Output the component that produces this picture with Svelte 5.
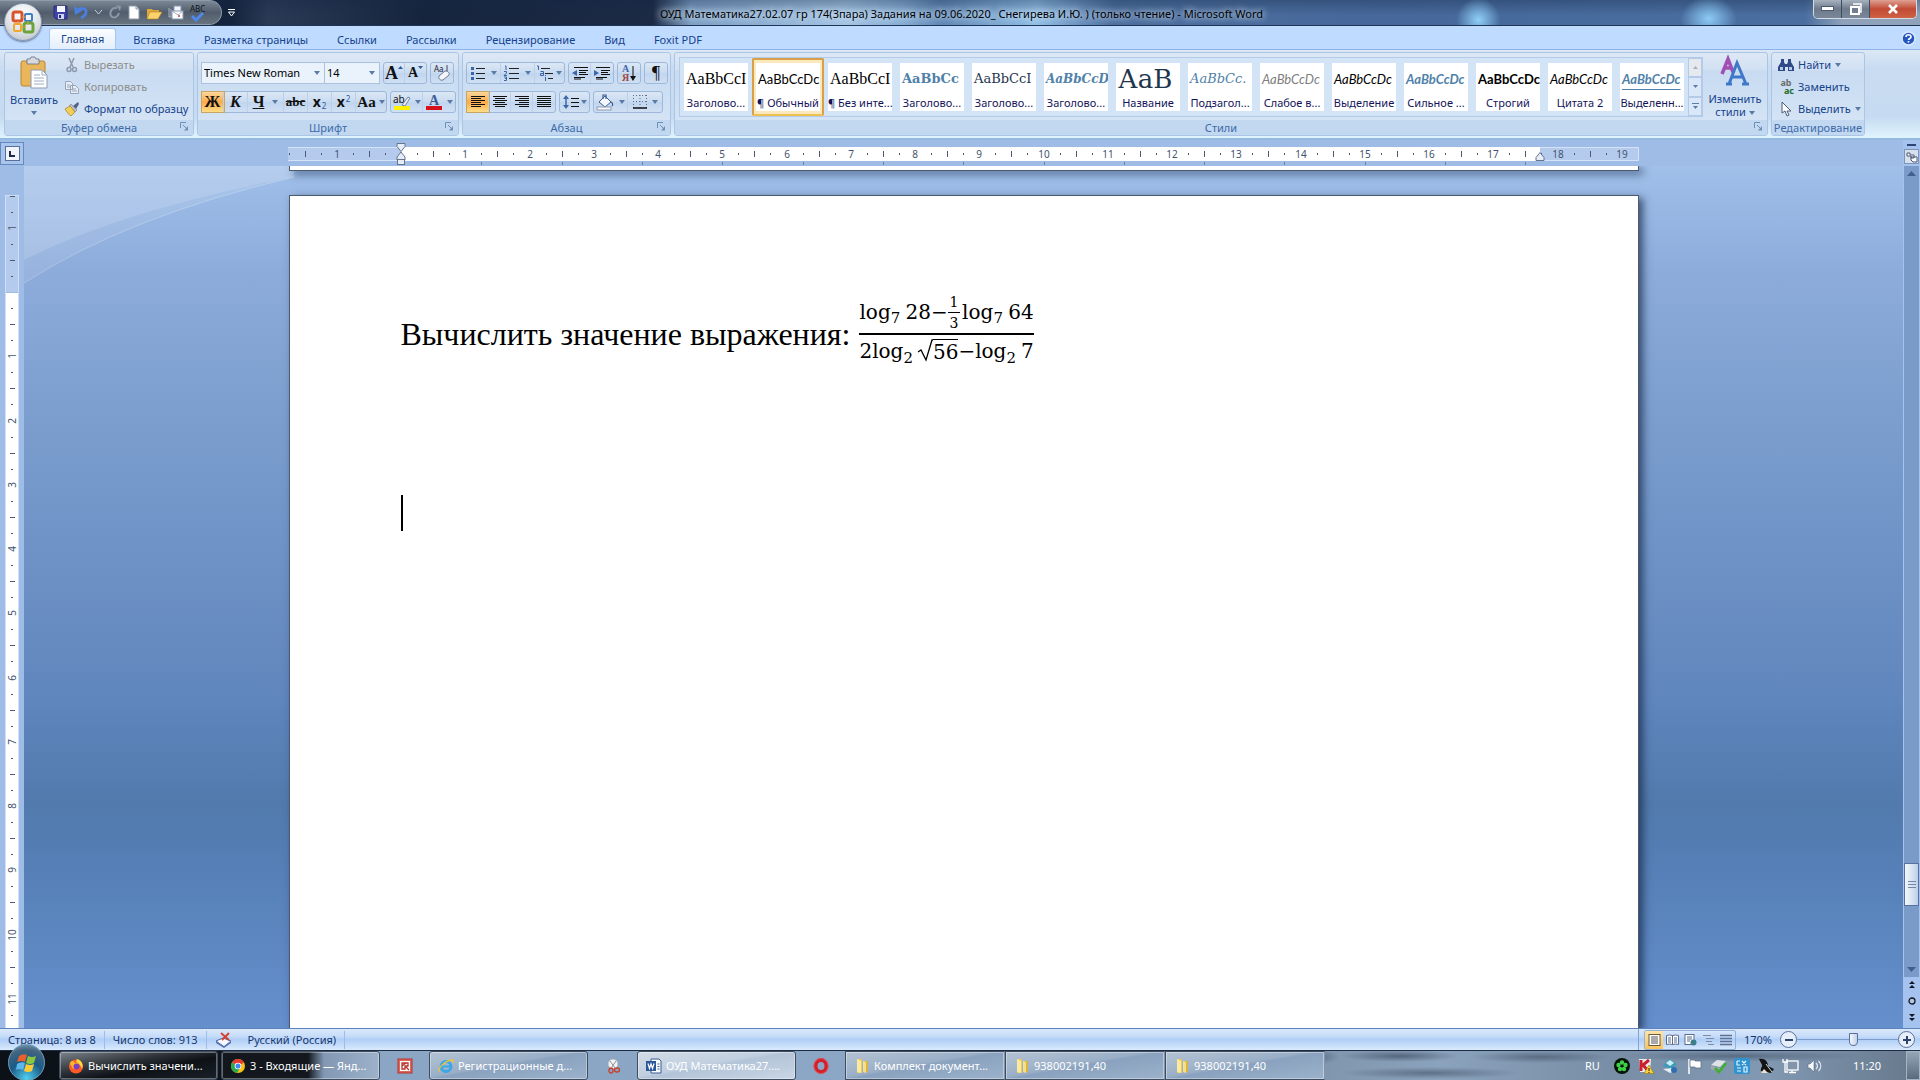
<script lang="ts">
  type Tab = { name: string; active?: boolean }
  type DocStyle = { sample: string; label: string; kind: string; selected?: boolean }
  type Task = { title: string; icon: string; look: string }

  const tabs: Tab[] = [
    { name: 'Главная', active: true },
    { name: 'Вставка' },
    { name: 'Разметка страницы' },
    { name: 'Ссылки' },
    { name: 'Рассылки' },
    { name: 'Рецензирование' },
    { name: 'Вид' },
    { name: 'Foxit PDF' },
  ]

  const docStyles: DocStyle[] = [
    { sample: 'AaBbCcI', label: 'Заголово...', kind: 'serif' },
    { sample: 'AaBbCcDc', label: '¶ Обычный', kind: 'sans', selected: true },
    { sample: 'AaBbCcI', label: '¶ Без инте...', kind: 'serif' },
    { sample: 'AaBbCc', label: 'Заголово...', kind: 'cambria bold blue' },
    { sample: 'AaBbCcI', label: 'Заголово...', kind: 'cambria navy' },
    { sample: 'AaBbCcD', label: 'Заголово...', kind: 'cambria bold italic blue little' },
    { sample: 'АаВ', label: 'Название', kind: 'cambria navy title' },
    { sample: 'AaBbCc.', label: 'Подзагол...', kind: 'cambria italic blue' },
    { sample: 'AaBbCcDc', label: 'Слабое в...', kind: 'sans italic grey' },
    { sample: 'AaBbCcDc', label: 'Выделение', kind: 'sans italic' },
    { sample: 'AaBbCcDc', label: 'Сильное ...', kind: 'sans bold italic blue' },
    { sample: 'AaBbCcDc', label: 'Строгий', kind: 'sans bold' },
    { sample: 'AaBbCcDc', label: 'Цитата 2', kind: 'sans italic' },
    { sample: 'AaBbCcDc', label: 'Выделенн...', kind: 'sans bold italic blue underlined' },
  ]

  const tasks: Task[] = [
    { title: 'Вычислить значени...', icon: 'firefox', look: 'dark' },
    { title: '3 - Входящие — Янд...', icon: 'chrome', look: 'half' },
    { title: '', icon: 'pdf', look: 'bare' },
    { title: 'Регистрационные д...', icon: 'ie', look: 'glass' },
    { title: '', icon: 'snip', look: 'bare' },
    { title: 'ОУД Математика27....', icon: 'word', look: 'current' },
    { title: '', icon: 'opera', look: 'bare' },
    { title: 'Комплект документ...', icon: 'folder', look: 'glass grouped' },
    { title: '938002191,40', icon: 'folder', look: 'glass grouped' },
    { title: '938002191,40', icon: 'folder', look: 'glass grouped' },
  ]

  const trayIcons = ['clover', 'kaspersky', 'dropbox', 'flag', 'check', 'input', 'pen', 'network', 'sound']

  const range = (n: number) => Array.from({ length: n }, (_, i) => i)

  // centimetres to screen pixels: 96 dpi at 170 %
  const cm = (n: number) => Math.round((n * 96 * 1.7) / 2.54)

  // quarter marks between the numbers: dot, dash, dot
  function marks(zero: number, end: number): { at: number; tall: boolean }[] {
    const out = []
    for (let q = -Math.floor(zero / 16); zero + cm(q / 4) < end - 2; q++) {
      if (q % 4 !== 0) out.push({ at: zero + cm(q / 4), tall: q % 2 === 0 })
    }
    return out
  }

  const hMarks = marks(113, 1351)
  const vMarks = marks(97, 833)

  let zoom = $state(57)
</script>

{#snippet caret()}
  <svg class="caret" viewBox="0 0 6 4" aria-hidden="true"><path d="M0 0h6L3 4z" fill="#5a7ba8" /></svg>
{/snippet}

{#snippet launcher()}
  <button class="launcher" aria-label="Параметры">
    <svg width="9" height="9" viewBox="0 0 9 9" fill="none" stroke="#6f8fb8">
      <path d="M.5 6V.5H6M3 3l4 4" /><path d="M8 4v4.500H4z" fill="#6f8fb8" stroke="none" />
    </svg>
  </button>
{/snippet}

{#snippet lines(kind: string)}
  <svg width="16" height="14" viewBox="0 0 16 14" stroke="#111" stroke-width="1" aria-hidden="true">
    {#each range(6) as i}
      {@const short = kind !== 'full' && i % 2 === 1}
      <path
        d="M{kind === 'right' && short ? 5 : kind === 'center' && short ? 3 : 1} {i * 2 + 1.5}H{kind === 'left' && short ? 11 : kind === 'center' && short ? 13 : 15}"
      />
    {/each}
  </svg>
{/snippet}

{#snippet appIcon(name: string)}
  <svg class="app-icon" viewBox="0 0 16 16" aria-hidden="true">
    {#if name === 'firefox'}
      <circle cx="8" cy="8.500" r="7" fill="#ff5a24" />
      <path d="M2 5c2-3 4-2 5 0 4-1 5 3 3 5-2 2-6 1-6-1 0-1-2-2-2-4z" fill="#ffb52b" />
      <circle cx="8.500" cy="8.500" r="3" fill="#7a3fc4" />
      <path d="M9 1c4 1 7 5 5 10-1-3-3-6-6-7z" fill="#ffd83c" />
    {:else if name === 'chrome'}
      <circle cx="8" cy="8" r="7" fill="#fbc116" />
      <path d="M8 8L2 4.500A7 7 0 0 1 14 4.500z" fill="#e33b2e" />
      <path d="M8 8L2 4.500A7 7 0 0 0 7 15l3-5z" fill="#2da94f" />
      <circle cx="8" cy="8" r="3.300" fill="#fff" /><circle cx="8" cy="8" r="2.500" fill="#4285f4" />
    {:else if name === 'pdf'}
      <rect x="1" y="1" width="14" height="14" fill="#d9695c" stroke="#b8322a" />
      <rect x="3" y="3" width="10" height="10" fill="#fff" />
      <path d="M5 5h6v3H8v3H5zM9 9l3 3M5 8l4-3" stroke="#b8322a" fill="none" stroke-width="1.300" />
    {:else if name === 'ie'}
      <circle cx="8" cy="8.500" r="5" fill="none" stroke="#39a7e8" stroke-width="2.800" />
      <path d="M4 8.500h9" stroke="#39a7e8" stroke-width="2" />
      <path d="M1 14c-1-4 5-11 13-12 2 0 1 2 1 3" fill="none" stroke="#e9c63c" stroke-width="1.300" />
    {:else if name === 'snip'}
      <circle cx="8" cy="6" r="5" fill="#f2f4f6" stroke="#a9afb7" />
      <path d="M5 3l5 7M11 3l-4 6" fill="none" stroke="#8a929d" />
      <ellipse cx="6" cy="12.500" rx="2" ry="2.500" fill="none" stroke="#c8402e" stroke-width="1.300" />
      <ellipse cx="12" cy="12" rx="2.500" ry="2" fill="none" stroke="#c8402e" stroke-width="1.300" />
    {:else if name === 'word'}
      <path d="M5 1h8l2 2v12H5z" fill="#f8fbff" stroke="#3a5a94" />
      <rect x="0" y="3" width="10" height="10" fill="#2b579a" />
      <path d="M2 5.500l1.500 5L5 6l1.500 4.500L8 5.500" fill="none" stroke="#fff" stroke-width="1.200" />
      <path d="M11.500 6h2M11.500 8.500h2M11.500 11h2" stroke="#3a5a94" />
    {:else if name === 'opera'}
      <ellipse cx="8" cy="8" rx="5.500" ry="6" fill="none" stroke="#d3202b" stroke-width="4" />
      <ellipse cx="8" cy="8" rx="7" ry="7.500" fill="none" stroke="#f0666a" stroke-width=".6" />
    {:else}
      <path d="M3 1h5v14H3z" fill="#e9c95c" />
      <path d="M3 1l4 2v12l-4-1z" fill="#fbeaa0" />
      <path d="M9 3h5v11H9z" fill="#d9b443" />
      <path d="M9 3l3 1v11l-3-1z" fill="#f6df86" />
    {/if}
  </svg>
{/snippet}

{#snippet trayIcon(name: string)}
  <svg class="app-icon" viewBox="0 0 16 16" aria-hidden="true">
    {#if name === 'clover'}
      <circle cx="8" cy="8" r="8" fill="#061306" />
      <g fill="#3fd04a">
        <circle cx="8" cy="4.500" r="2.200" /><circle cx="4.500" cy="7" r="2.200" /><circle cx="11.500" cy="7" r="2.200" />
        <circle cx="6" cy="11" r="2.200" /><circle cx="10" cy="11" r="2.200" />
      </g>
    {:else if name === 'kaspersky'}
      <path d="M1 1h12l-1 13H2z" fill="#e8eef0" /><path d="M3 2v11M11 2L5 7l6 7" stroke="#c9202c" stroke-width="3" fill="none" />
      <path d="M11 7l5 8.500H6z" fill="#f7cf3c" stroke="#9a7612" stroke-width=".6" /><path d="M11 10v3M11 14v1" stroke="#222" />
    {:else if name === 'dropbox'}
      <path d="M1 8l6-7 8 5-6 5z" fill="#3d9ab8" /><path d="M4 5l4-3 4 3-4 3z" fill="#c9f0f4" />
      <path d="M1 11l7 4 7-3-5-2z" fill="#e5eef2" /><circle cx="12" cy="12" r="3" fill="#2f6fb0" />
    {:else if name === 'flag'}
      <path d="M3 1v15" stroke="#fff" stroke-width="1.500" /><path d="M4 2h5v1h6v7H9V9H4z" fill="#fff" stroke="#56687e" stroke-width=".7" />
    {:else if name === 'check'}
      <path d="M1 7l6-5 9 1-6 6z" fill="#dfe2e4" /><path d="M1 8l9 2v4l-9-3z" fill="#a4a9ad" />
      <path d="M5 10l4 4 7-9" fill="none" stroke="#3fae35" stroke-width="2.800" />
    {:else if name === 'input'}
      <rect width="16" height="16" rx="2" fill="#2f93cf" /><path d="M3 3h3M3 3v4h3M8 3l4 4M12 3L8 7M3 10h4M3 13h4M10 9v5h3V9z" stroke="#e6f6ff" stroke-width="1.200" fill="none" />
    {:else if name === 'pen'}
      <path d="M1 1c6-1 9 3 9 7l6 3-3 4-10-2c-1-4 3-4 0-8z" fill="#141414" /><path d="M8 6l6 8" stroke="#d9d9d9" /><path d="M3 15l3-4 4 4z" fill="#e9e1d2" />
    {:else if name === 'network'}
      <rect x="5" y="3" width="11" height="9" fill="#8295ab" stroke="#fff" stroke-width="1.300" />
      <path d="M7 14.500h7M10 12v3M1 1v3h4V1M3 4v10h3" fill="none" stroke="#fff" stroke-width="1.300" />
    {:else}
      <path d="M2 6h2l4-4v12l-4-4H2z" fill="#f6f9fc" stroke="#5c6d80" stroke-width=".6" />
      <path d="M10 5c2 2 2 4 0 6M12.500 3c3 3 3 7 0 10" fill="none" stroke="#e6ecf2" stroke-width="1.200" />
    {/if}
  </svg>
{/snippet}

<div class="window">
  <header class="titlebar">
    <div class="quick">
      <button class="tool" aria-label="Сохранить">
        <svg width="15" height="15" viewBox="0 0 15 15"><path d="M1 1h13v13H3l-2-2z" fill="#3d43a8" stroke="#262a78" /><path d="M4 1h8v6H4z" fill="#f4f6ff" /><path d="M5 9h6v5H5z" fill="#cfd5ee" /><path d="M6 10h2v3H6z" fill="#262a78" /></svg>
      </button>
      <button class="tool" aria-label="Отменить">
        <svg width="15" height="15" viewBox="0 0 15 15"><path d="M3 6c4-4 10-3 9 2-1 3-3 4-5 5" fill="none" stroke="#4a7fe0" stroke-width="2.800" /><path d="M0 1l1 9 7-4z" fill="#4a7fe0" /></svg>
      </button>
      <svg width="7" height="5" viewBox="0 0 7 5"><path d="M0 0l3.500 4L7 0" fill="none" stroke="#c9d3e2" /></svg>
      <button class="tool" aria-label="Вернуть">
        <svg width="14" height="15" viewBox="0 0 14 15"><path d="M9 3c-5-1-8 4-6 8 3 3 7 1 8-3" fill="none" stroke="#8b98a8" stroke-width="2" /><path d="M8 0l5 1-1 5z" fill="#8b98a8" /></svg>
      </button>
      <button class="tool" aria-label="Создать">
        <svg width="12" height="15" viewBox="0 0 12 15"><path d="M1 1h7l3 3v10H1z" fill="#fff" stroke="#8e9bb0" /><path d="M8 1v3h3" fill="#cfdaea" stroke="#8e9bb0" /></svg>
      </button>
      <button class="tool" aria-label="Открыть">
        <svg width="16" height="14" viewBox="0 0 16 14"><path d="M1 3h5l1 1h6v3H5l-3 6H1z" fill="#dfa63a" /><path d="M4 6h12l-4 7H1z" fill="#fbd36b" stroke="#b98222" stroke-width=".6" /></svg>
      </button>
      <button class="tool" aria-label="Отправить">
        <svg width="16" height="15" viewBox="0 0 16 15"><rect x="6" y="1" width="7" height="7" fill="#f3f6fb" stroke="#8797b4" /><rect x="4" y="6" width="11" height="8" fill="#fff" stroke="#8797b4" /><path d="M4 6l6 4 5-4M3 4v8H1V3" fill="none" stroke="#a9b3c4" /><circle cx="11" cy="11" r="1" fill="#cc3b3b" /></svg>
      </button>
      <button class="tool spell" aria-label="Правописание">
        <span>ABC</span>
        <svg width="13" height="9" viewBox="0 0 13 9"><path d="M1 4l4 4 7-7" fill="none" stroke="#4c8af0" stroke-width="2.800" /></svg>
      </button>
    </div>
    <button class="customize" aria-label="Настройка панели">
      <svg width="7" height="8" viewBox="0 0 7 8"><path d="M0 .5h7" stroke="#fff" /><path d="M.5 3h6l-3 4z" fill="none" stroke="#fff" /></svg>
    </button>
    <h1>ОУД Математика27.02.07 гр 174(3пара) Задания на 09.06.2020_ Снегирева И.Ю. ) (только чтение) - Microsoft Word</h1>
    <div class="controls">
      <button aria-label="Свернуть"><svg width="13" height="6" viewBox="0 0 13 6"><rect x=".5" y=".5" width="12" height="4" fill="#fff" stroke="#4c5a70" /></svg></button>
      <button aria-label="Восстановить"><svg width="14" height="13" viewBox="0 0 14 13"><path d="M4 1h8v8h-2" fill="none" stroke="#fff" stroke-width="1.500" /><rect x="2" y="4" width="8" height="7" fill="none" stroke="#fff" stroke-width="2" /></svg></button>
      <button class="close" aria-label="Закрыть"><svg width="12" height="10" viewBox="0 0 12 10"><path d="M2 1l8 8M10 1L2 9" stroke="#fff" stroke-width="2.600" /></svg></button>
    </div>
    <button class="office" aria-label="Кнопка Office">
      <svg width="26" height="26" viewBox="0 0 26 26" fill="none" stroke-width="3">
        <rect x="3" y="3" width="9" height="9" rx="2" stroke="#d8552a" />
        <rect x="15" y="5" width="7" height="7" rx="1" stroke="#3f7fc4" stroke-width="2" />
        <rect x="4" y="15" width="7" height="7" rx="1" stroke="#f0a92c" stroke-width="2" />
        <rect x="14" y="14" width="9" height="9" rx="2" stroke="#6ba43a" />
        <path d="M12 8h4M8 12v4M18 12v4M12 18h4" stroke="#e59c4a" stroke-width="1" />
      </svg>
    </button>
  </header>

  <nav class="tabs">
    {#each tabs as tab}
      <button class:active={tab.active}>{tab.name}</button>
    {/each}
    <button class="help" aria-label="Справка">
      <svg width="15" height="15" viewBox="0 0 15 15"><circle cx="7.500" cy="7.500" r="6.500" fill="#2456c0" stroke="#dbe8fb" stroke-width="1.500" /><path d="M5 6c0-3 5-3 5 0 0 1.500-2.500 1.500-2.500 3" fill="none" stroke="#fff" stroke-width="1.600" /><rect x="6.700" y="10" width="1.600" height="1.600" fill="#fff" /></svg>
    </button>
  </nav>

  <section class="ribbon">
    <div class="group clipboard">
      <div class="content">
        <button class="big">
          <svg width="28" height="32" viewBox="0 0 28 32">
            <rect x="1" y="4" width="24" height="25" rx="2" fill="#e9b75a" stroke="#b98532" />
            <path d="M7 2h3l1-2h4l1 2h3v5H7z" fill="#d6d9df" stroke="#666e7c" stroke-width=".8" />
            <path d="M11 13h11l5 5v13H11z" fill="#fff" stroke="#8d9bb5" />
            <path d="M22 13v5h5M14 18h6M14 21h10M14 24h10M14 27h10" fill="none" stroke="#9dacc6" />
          </svg>
          <span>Вставить</span>
          {@render caret()}
        </button>
        <div class="stack">
          <button class="small" disabled>
            <svg width="16" height="16" viewBox="0 0 16 16" fill="none" stroke="#8d99ac" stroke-width="1.500"><path d="M5 1l4 9M10 1L6 10" /><circle cx="5" cy="12.500" r="2" /><circle cx="10.500" cy="12.500" r="2" /></svg>
            Вырезать
          </button>
          <button class="small" disabled>
            <svg width="16" height="16" viewBox="0 0 16 16" fill="#e9eef6" stroke="#98a5b9"><path d="M1.500 2.500h5l2 2v6h-7zM6.500 6.500h5l3 3v5h-8z" /><path d="M3 6h3M3 8h3M8 10h4M8 12h5" /></svg>
            Копировать
          </button>
          <button class="small">
            <svg width="16" height="16" viewBox="0 0 16 16"><path d="M9 5l5-4 1 2-3 5z" fill="#56618a" /><path d="M7 3l6 6-2 2-6-6z" fill="#b9c0cc" stroke="#777" stroke-width=".6" /><path d="M1 8l5-3 5 6-4 4c-2-1-4-4-6-7z" fill="#f3cf58" stroke="#a17d21" stroke-width=".7" /></svg>
            Формат по образцу
          </button>
        </div>
      </div>
      <footer>Буфер обмена{@render launcher()}</footer>
    </div>

    <div class="group font">
      <div class="content rows">
        <div class="row">
          <div class="combos">
            <label class="combo family"><select aria-label="Шрифт"><option>Times New Roman</option></select>{@render caret()}</label>
            <label class="combo size"><select aria-label="Размер шрифта"><option>14</option></select>{@render caret()}</label>
          </div>
          <div class="cluster">
            <button class="glyph serif-a">A<svg width="5" height="3" viewBox="0 0 5 3"><path d="M0 3h5L2.500 0z" fill="#2f5a9c" /></svg></button>
            <button class="glyph serif-a less">A<svg width="5" height="3" viewBox="0 0 5 3"><path d="M0 0h5L2.500 3z" fill="#2f5a9c" /></svg></button>
          </div>
          <div class="cluster">
            <button class="glyph" aria-label="Очистить формат"><svg width="18" height="18" viewBox="0 0 18 18"><text x="1" y="8" font-size="8" fill="#223">Aa</text><path d="M6 12l6-5c3 0 5 2 4 4l-6 5c-3 1-5-2-4-4z" fill="#f4f6fa" stroke="#6b7690" /><path d="M14 1v6" stroke="#445" /></svg></button>
          </div>
        </div>
        <div class="row">
          <div class="cluster">
            <button class="glyph on"><b>Ж</b></button>
            <button class="glyph"><b><i>К</i></b></button>
            <button class="glyph wide"><b><u>Ч</u></b>{@render caret()}</button>
            <button class="glyph strike"><s>abc</s></button>
            <button class="glyph script"><b>x</b><sub>2</sub></button>
            <button class="glyph script"><b>x</b><sup>2</sup></button>
            <button class="glyph case">Aa{@render caret()}</button>
          </div>
          <div class="cluster">
            <button class="glyph pair" aria-label="Цвет выделения">
              <svg width="18" height="18" viewBox="0 0 18 18"><text x="0" y="10" font-size="10" fill="#111">ab</text><path d="M9 12l6-8 2 1-5 8z" fill="#e8eef6" stroke="#5b6b88" stroke-width=".8" /><rect x="1" y="13" width="16" height="4" fill="#fff200" /></svg>
              {@render caret()}
            </button>
            <button class="glyph pair font-color" aria-label="Цвет текста">
              <svg width="18" height="18" viewBox="0 0 18 18"><text x="4" y="12" font-size="14" font-weight="bold" fill="#3c5a96">A</text><rect x="1" y="13" width="16" height="4" fill="#d5101a" /></svg>
              {@render caret()}
            </button>
          </div>
        </div>
      </div>
      <footer>Шрифт{@render launcher()}</footer>
    </div>

    <div class="group paragraph">
      <div class="content rows">
        <div class="row">
          <div class="cluster">
            <button class="glyph pair" aria-label="Маркеры">
              <svg width="15" height="14" viewBox="0 0 15 14"><g fill="#3d66a8"><rect x="0" y="1" width="3" height="3" /><rect x="0" y="6" width="3" height="3" /><rect x="0" y="11" width="3" height="3" /></g><path d="M5 2.500h9M5 7.500h9M5 12.500h9" stroke="#222" /></svg>
              {@render caret()}
            </button>
            <button class="glyph pair" aria-label="Нумерация">
              <svg width="16" height="16" viewBox="0 0 16 16"><path d="M1 1h1v4M0 6.500h2.500v1.500L0 10.500h3M0 12h2.500v3.500H0M1 13.500h1" fill="none" stroke="#3d66a8" /><path d="M5 3.500h10M5 8.500h10M5 13.500h10" stroke="#222" /></svg>
              {@render caret()}
            </button>
            <button class="glyph multi" aria-label="Многоуровневый список">
              <svg width="17" height="16" viewBox="0 0 17 16"><path d="M0 1h1.500v4M3.500 6.500h3v4h-3v-2h3M8.500 12v4M8.500 10v1" fill="none" stroke="#3d66a8" /><path d="M4 3.500h9M8 8.500h8M11 13.500h5" stroke="#222" /></svg>
              {@render caret()}
            </button>
          </div>
          <div class="cluster">
            <button class="glyph" aria-label="Уменьшить отступ"><svg width="16" height="14" viewBox="0 0 16 14"><path d="M2 1.500h14M7 4.500h9M7 6.500h7M7 8.500h9M2 11.500h11M2 13h7" stroke="#111" /><path d="M5 4v6L0 7z" fill="#3d66a8" /></svg></button>
            <button class="glyph" aria-label="Увеличить отступ"><svg width="16" height="14" viewBox="0 0 16 14"><path d="M2 1.500h14M7 4.500h9M7 6.500h7M7 8.500h9M2 11.500h11M2 13h7" stroke="#111" /><path d="M0 4v6l5-3z" fill="#3d66a8" /></svg></button>
          </div>
          <div class="cluster">
            <button class="glyph sort" aria-label="Сортировка">
              <span class="letters"><span>А</span><span>Я</span></span>
              <svg width="6" height="15" viewBox="0 0 6 15"><path d="M3 0v11" stroke="#111" /><path d="M0 10h6l-3 5z" fill="#111" /></svg>
            </button>
          </div>
          <div class="cluster">
            <button class="glyph pilcrow">¶</button>
          </div>
        </div>
        <div class="row">
          <div class="cluster">
            <button class="glyph on" aria-label="По левому краю">{@render lines('left')}</button>
            <button class="glyph" aria-label="По центру">{@render lines('center')}</button>
            <button class="glyph" aria-label="По правому краю">{@render lines('right')}</button>
            <button class="glyph" aria-label="По ширине">{@render lines('full')}</button>
          </div>
          <div class="cluster">
            <button class="glyph multi" aria-label="Интервал">
              <svg width="16" height="16" viewBox="0 0 16 16"><path d="M3 3v10" stroke="#3d66a8" stroke-width="1.500" /><path d="M0 5l3-4 3 4zM0 11l3 4 3-4z" fill="#3d66a8" /><path d="M8 4.500h8M8 8.500h8M8 12.500h8" stroke="#111" /></svg>
              {@render caret()}
            </button>
          </div>
          <div class="cluster">
            <button class="glyph pair" aria-label="Заливка">
              <svg width="18" height="17" viewBox="0 0 18 17"><path d="M3 8l6-6 6 6-6 5z" fill="#f4f8fd" stroke="#3b5c93" /><path d="M7 5V1h3v4M15 8c2 1 2 3 1 4" fill="none" stroke="#3b5c93" stroke-width="1.200" /><rect x="1" y="13" width="14" height="3" fill="#f8f8f8" stroke="#8b9bb5" /></svg>
              {@render caret()}
            </button>
            <button class="glyph pair" aria-label="Границы">
              <svg width="14" height="14" viewBox="0 0 14 14"><path d="M.5 0v13M7 0v13M13.500 0v13M0 .5h14M0 6.500h14" stroke="#5d6f8d" stroke-dasharray="1 2" /><path d="M0 13h14" stroke="#111" stroke-width="1.500" /></svg>
              {@render caret()}
            </button>
          </div>
        </div>
      </div>
      <footer>Абзац{@render launcher()}</footer>
    </div>

    <div class="group styles">
      <div class="content">
        <div class="gallery">
          {#each docStyles as s}
            <button class="style" class:selected={s.selected}>
              <span class="sample {s.kind}">{s.sample}</span>
              <span class="label">{s.label}</span>
            </button>
          {/each}
          <div class="gallery-scroll">
            <button disabled aria-label="Вверх"><svg width="5" height="3" viewBox="0 0 5 3"><path d="M0 3h5L2.500 0z" fill="#a5b0c0" /></svg></button>
            <button aria-label="Вниз"><svg width="5" height="3" viewBox="0 0 5 3"><path d="M0 0h5L2.500 3z" fill="#5a7ba8" /></svg></button>
            <button aria-label="Все стили"><svg width="7" height="7" viewBox="0 0 7 7"><path d="M0 .5h7" stroke="#5a7ba8" /><path d="M1 3h5L3.500 6z" fill="#5a7ba8" /></svg></button>
          </div>
        </div>
        <button class="big change">
          <svg width="30" height="30" viewBox="0 0 30 30" fill="none">
            <path d="M2 17L8 2l5 13M4 11h7" stroke="#a24fb4" stroke-width="3.500" />
            <path d="M9 27L17 6l9 21M12 20h11M6 27h6M22 27h7" stroke="#3f78c8" stroke-width="3" />
          </svg>
          <span>Изменить</span>
          <span>стили {@render caret()}</span>
        </button>
      </div>
      <footer>Стили{@render launcher()}</footer>
    </div>

    <div class="group editing">
      <div class="content">
        <div class="stack">
          <button class="small">
            <svg width="16" height="14" viewBox="0 0 16 14"><path d="M3 1h3v3l1 2h2l1-2V1h3v3l3 5v4h-6V9H7v4H0V9l3-5z" fill="#2f4a86" /><path d="M2 9h3v3H2zM11 9h3v3h-3z" fill="#b5c8e8" /></svg>
            Найти {@render caret()}
          </button>
          <button class="small">
            <span class="replace"><b>ab</b><b>ac</b></span>
            Заменить
          </button>
          <button class="small">
            <svg width="16" height="16" viewBox="0 0 16 16"><path d="M4 1v11l3-2 2 5 2-1-2-4h4z" fill="#fff" stroke="#4b5b78" /></svg>
            Выделить {@render caret()}
          </button>
        </div>
      </div>
      <footer>Редактирование</footer>
    </div>
  </section>

  <main>
    <aside class="left-rail">
      <button class="tab-stop" aria-label="Табуляция"><span><svg width="6" height="6" viewBox="0 0 6 6"><path d="M1 0v5h5" fill="none" stroke="#1c2b4d" stroke-width="2" /></svg></span></button>
      <svg class="v-ruler" width="14" height="833" viewBox="0 0 14 833">
        <rect width="14" height="97" fill="#b4cbee" />
        <rect y="98" width="14" height="735" fill="#fff" />
        <path d="M.5 0v833M13.500 0v833M0 .5h14" stroke="#cfdff7" />
        {#each vMarks as m}
          <path d={m.tall ? `M5 ${m.at}.5h5` : `M6 ${m.at}.5h2`} stroke="#4d5a70" />
        {/each}
        <text transform="translate(11 33) rotate(-90)">1</text>
        {#each range(11) as i}
          <text transform="translate(11 {97 + cm(i + 1)}) rotate(-90)">{i + 1}</text>
        {/each}
      </svg>
    </aside>

    <div class="work">
      <div class="ruler-row">
        <svg width="1351" height="24" viewBox="0 0 1351 24">
          <rect y="4" width="1350" height="14" fill="#b4cbee" />
          <path d="M0 4.500h1350.500v13H0" fill="none" stroke="#d5e3f8" />
          <rect x="113" y="4" width="1139" height="14" fill="#fff" />
          {#each hMarks as m}
            <path d={m.tall ? `M${m.at}.5 8v6` : `M${m.at}.5 10v2`} stroke="#4d5a70" />
          {/each}
          {#each range(14) as i}
            <path d="M{113 + cm((i + 1) * 1.25)}.5 19v3" stroke="#6b7f9e" />
          {/each}
          <text x="49" y="15">1</text>
          {#each range(19) as i}
            <text x={113 + cm(i + 1)} y="15">{i + 1}</text>
          {/each}
          <g fill="#e6edf8" stroke="#66758e">
            <path d="M109 .5h8v3l-4 5-4-5z" /><path d="M113 9l4 5v3h-8v-3z" /><rect x="109.500" y="16.500" width="7" height="5" />
            <path d="M1252 9.500l4 5v3h-8v-3z" />
          </g>
        </svg>
      </div>
      <div class="canvas">
        <svg class="swoosh" width="270" height="120" viewBox="0 0 270 120" aria-hidden="true">
          <path d="M0 0h270v11Q98 44 0 94z" fill="#fff" opacity=".22" />
          <path d="M0 94Q98 44 270 11Q104 50 0 117z" fill="#fff" opacity=".1" />
          <path d="M0 117Q104 50 270 11" fill="none" stroke="#fff" opacity=".25" />
        </svg>
        <div class="page previous"></div>
        <article class="page">
          <p class="task">
            <span>Вычислить значение выражения:</span>
            <span class="frac">
              <span class="line num">log<sub>7</sub><span class="arg">28−</span><span class="third"><span>1</span><span>3</span></span>log<sub>7</sub><span class="arg">64</span></span>
              <span class="line den">2log<sub>2</sub><span class="root"><svg width="16" height="22" viewBox="0 0 16 22"><path d="M1 13l3-2 5 10L15 1h1" fill="none" stroke="#000" stroke-width="1.300" /></svg><span>56</span></span>−log<sub>2</sub><span class="arg">7</span></span>
            </span>
          </p>
          <div class="cursor"></div>
        </article>
      </div>
    </div>

    <aside class="scroll">
      <div class="split"></div>
      <button class="ruler-toggle" aria-label="Линейка"><svg width="12" height="12" viewBox="0 0 12 12" fill="#fff" stroke="#4a5874"><path d="M1 2h3v2h4v3H5V5H1zM5 6h6v5H7L5 9z" /></svg></button>
      <div class="track">
        <button aria-label="Вверх"><svg width="9" height="5" viewBox="0 0 9 5"><path d="M0 5h9L4.500 0z" fill="#425f92" /></svg></button>
        <div class="thumb"><svg width="8" height="7" viewBox="0 0 8 7"><path d="M0 .5h8M0 3.500h8M0 6.500h8" stroke="#7587a5" /></svg></div>
        <button aria-label="Вниз"><svg width="9" height="5" viewBox="0 0 9 5"><path d="M0 0h9L4.500 5z" fill="#425f92" /></svg></button>
      </div>
      <div class="jump">
        <button aria-label="Предыдущая страница"><svg width="6" height="7" viewBox="0 0 6 7"><path d="M0 3h6L3 0zM0 7h6L3 4z" fill="#0d1524" /></svg></button>
        <button aria-label="Объект перехода"><svg width="8" height="8" viewBox="0 0 8 8"><circle cx="4" cy="4" r="3" fill="#b7c6de" stroke="#0d1524" stroke-width="1.300" /></svg></button>
        <button aria-label="Следующая страница"><svg width="6" height="7" viewBox="0 0 6 7"><path d="M0 0h6L3 3zM0 4h6L3 7z" fill="#0d1524" /></svg></button>
      </div>
    </aside>
  </main>

  <section class="status">
    <button>Страница: 8 из 8</button>
    <button>Число слов: 913</button>
    <button class="lang">
      <svg width="18" height="16" viewBox="0 0 18 16"><path d="M1 9l7-3 8 3-7 6z" fill="#f5f8ff" stroke="#4c64a0" /><path d="M1 9v2l8 5v-2zM9 14l7-5v2l-7 5z" fill="#5874b8" /><path d="M6 1l8 7M14 1L7 8" stroke="#d5402c" stroke-width="1.800" /></svg>
      Русский (Россия)
    </button>
    <div class="right">
      <div class="views">
        <button class="on" aria-label="Разметка"><svg width="13" height="12" viewBox="0 0 13 12"><rect x="1" y=".5" width="11" height="11" fill="#fff" stroke="#6b5a3a" /><path d="M3 3h7M3 5h7M3 7h7M3 9h7" stroke="#555" /></svg></button>
        <button aria-label="Чтение"><svg width="13" height="12" viewBox="0 0 13 12"><path d="M.5 1.500q3-1 6 0 3-1 6 0v9q-3-1-6 0-3-1-6 0zM6.500 1v10" fill="#fff" stroke="#5b6d8d" /><path d="M2 4h3M2 6h3M8 4h3M8 6h3M2 8h3M8 8h3" stroke="#5b6d8d" /></svg></button>
        <button aria-label="Веб-документ"><svg width="13" height="12" viewBox="0 0 13 12"><rect x="1" y=".5" width="9" height="10" fill="#fff" stroke="#5b6d8d" /><path d="M3 3h5M3 5h5M3 7h3" stroke="#5b6d8d" /><circle cx="9.500" cy="8.500" r="3" fill="#3b7f8c" /></svg></button>
        <button aria-label="Структура"><svg width="13" height="12" viewBox="0 0 13 12"><path d="M1 1.500h8M4 4.500h8M4 7.500h6M6 10.500h6" stroke="#7d8ca5" /></svg></button>
        <button aria-label="Черновик"><svg width="13" height="12" viewBox="0 0 13 12"><path d="M0 1.500h12M0 4.500h12M0 7.500h12M0 10.500h12" stroke="#5f7190" stroke-width="1.300" /></svg></button>
      </div>
      <button class="percent">170%</button>
      <button class="round" aria-label="Уменьшить"><svg width="8" height="8" viewBox="0 0 8 8"><path d="M0 4h8" stroke="#2d4370" stroke-width="2" /></svg></button>
      <input type="range" min="0" max="100" bind:value={zoom} aria-label="Масштаб" />
      <button class="round" aria-label="Увеличить"><svg width="8" height="8" viewBox="0 0 8 8"><path d="M0 4h8M4 0v8" stroke="#2d4370" stroke-width="2" /></svg></button>
    </div>
  </section>

  <footer class="taskbar">
    <button class="start" aria-label="Пуск">
      <svg width="22" height="20" viewBox="0 0 22 20"><path d="M3 3q4-3 8-1l-2 7q-4-2-8 0z" fill="#e8602c" /><path d="M12 3q4 2 8 0l-2 7q-4 2-8 0z" fill="#8cc63e" /><path d="M1 11q4-3 8-1l-2 7q-4-2-7 0z" fill="#5cb8ec" /><path d="M10 11q4 2 8 0l-2 7q-4 2-8 0z" fill="#fccb36" /></svg>
    </button>
    <div class="tasks">
      {#each tasks as task}
        <button class="task-button {task.look}" aria-label={task.title || task.icon}>
          {@render appIcon(task.icon)}
          {#if task.title}<span>{task.title}</span>{/if}
        </button>
      {/each}
    </div>
    <div class="tray">
      <span class="locale">RU</span>
      {#each trayIcons as name}
        {@render trayIcon(name)}
      {/each}
      <time>11:20</time>
      <button class="desktop" aria-label="Показать рабочий стол"></button>
    </div>
  </footer>
</div>

<style>
  :global(body) {
    margin: 0;
    background: #9fbde6;
  }

  .window {
    display: flex;
    flex-direction: column;
    height: 100vh;
    overflow: hidden;
    font: 11px/16px 'Noto Sans', 'Open Sans', sans-serif;
    color: #15428b;
  }

  button {
    border: 0;
    padding: 0;
    background: none;
    font: inherit;
    color: inherit;
    display: flex;
    align-items: center;
    justify-content: center;
    box-sizing: border-box;
    white-space: nowrap;
  }

  svg {
    flex: none;
    overflow: visible;
  }

  .caret {
    width: 6px;
    height: 4px;
  }

  /* title bar */
  .titlebar {
    position: relative;
    display: flex;
    align-items: flex-start;
    height: 26px;
    box-sizing: border-box;
    border-bottom: 1px solid #1f3554;
    background:
      radial-gradient(ellipse 22px 22px at 77% 80%, #8fd0f8, transparent),
      radial-gradient(ellipse 28px 22px at 89% 75%, #8ccbf5, transparent),
      linear-gradient(180deg, rgba(20, 40, 70, 0.35), transparent 60%),
      linear-gradient(90deg, #1e2f48 0, #14233c 12%, #2a3a55 14%, #16243d 22%, #1c2a45 34%, #7d9fc4 36%, #a3c4e4 44%, #86add3 47%, #5f87b4 49%, #91bfe6 54%, #4c6e9e 58%, #46689a 72%, #4a6ea0 94%, #8fa2ba 96%);
  }

  .quick {
    display: flex;
    align-items: center;
    gap: 6px;
    height: 25px;
    width: 222px;
    padding-left: 53px;
    box-sizing: border-box;
    border: 1px solid #8d9bab;
    border-left: 0;
    border-radius: 0 14px 14px 0;
    background: linear-gradient(#7b8794, #515d6c 50%, #68747f);
  }

  .spell {
    flex-direction: column;
  }

  .spell span {
    font-size: 8px;
    line-height: 7px;
    color: #10131c;
  }

  .customize {
    width: 18px;
    height: 25px;
  }

  h1 {
    flex: 1;
    margin: 0;
    padding-right: 130px;
    font-size: 11px;
    font-weight: normal;
    line-height: 27px;
    text-align: center;
    color: #000;
    white-space: nowrap;
    text-shadow: 0 0 6px #dcecfb, 0 0 8px rgba(220, 236, 251, 0.7);
  }

  .controls {
    display: flex;
    height: 18px;
    margin-right: 3px;
    border: 1px solid #d2dbe6;
    border-top: 0;
    border-radius: 0 0 5px 5px;
    overflow: hidden;
  }

  .controls button {
    width: 28px;
    border-right: 1px solid #3c4c63;
    background: linear-gradient(#a8b2bf, #6d7a8c 50%, #7b8899);
  }

  .controls .close {
    width: 46px;
    border: 0;
    background: linear-gradient(#dfa193, #c24a34 50%, #ce6243);
  }

  .office {
    position: absolute;
    left: 4px;
    top: 3px;
    z-index: 2;
    width: 38px;
    height: 38px;
    border-radius: 50%;
    border: 1px solid #8796ac;
    background: radial-gradient(circle at 50% 30%, #fff, #dfe3e8 55%, #b1b8c1);
    box-shadow: 0 1px 2px rgba(30, 50, 90, 0.6);
  }

  /* tabs */
  .tabs {
    display: flex;
    align-items: flex-end;
    height: 23px;
    padding-left: 48px;
    background: #bfdbff;
  }

  .tabs button {
    height: 21px;
    padding: 2px 15px 0 14px;
  }

  .tabs .active {
    padding: 0 11px;
    margin: 0 3px 0 1px;
    border: 1px solid #a7c6ee;
    border-bottom: 0;
    border-radius: 3px 3px 0 0;
    background: linear-gradient(#fbfdff, #e3eefb);
  }

  .tabs .help {
    margin-left: auto;
    padding: 0 4px;
  }

  /* ribbon */
  .ribbon {
    display: flex;
    gap: 3px;
    height: 91px;
    box-sizing: border-box;
    padding: 2px 4px;
    border-top: 1px solid #8db2e3;
    border-bottom: 2px solid #92bbdf;
    background: linear-gradient(#dce8f6, #c9dcf1 20%, #c6daf1 75%, #dff4fd);
  }

  .group {
    display: flex;
    flex-direction: column;
    flex: none;
    border: 1px solid #abc6e5;
    border-radius: 3px;
    box-sizing: border-box;
    background: linear-gradient(#dde8f5, #d2e1f3 20%, #c8dbf1 22%, #d7e6f6);
  }

  .group .content {
    display: flex;
    flex: 1;
    padding: 0 4px;
  }

  .group footer {
    position: relative;
    height: 15px;
    line-height: 15px;
    text-align: center;
    background: #c1d8f0;
    color: #3e6aaa;
  }

  .launcher {
    position: absolute;
    right: 4px;
    top: 2px;
  }

  .clipboard {
    width: 190px;
  }

  .font {
    width: 262px;
  }

  .paragraph {
    width: 209px;
  }

  .styles {
    width: 1094px;
  }

  .editing {
    width: 94px;
  }

  .big {
    flex-direction: column;
    justify-content: flex-start;
    gap: 3px;
    width: 50px;
    padding-top: 4px;
  }

  .stack {
    display: flex;
    flex-direction: column;
    gap: 6px;
    padding: 4px 0 0 5px;
  }

  .small {
    justify-content: flex-start;
    gap: 4px;
    height: 16px;
  }

  .small:disabled {
    color: #8d8d8d;
  }

  .editing .stack {
    padding-left: 2px;
  }

  .replace {
    position: relative;
    display: flex;
    flex-direction: column;
    width: 16px;
    font-size: 9px;
    line-height: 8px;
    color: #6b6b6b;
  }

  .replace b:last-child {
    align-self: flex-end;
    color: #1d6b2a;
  }

  .rows {
    flex-direction: column;
    gap: 7px;
  }

  .group .rows {
    padding: 9px 0 0 3px;
  }

  .row {
    display: flex;
    gap: 3px;
    height: 22px;
  }

  .combos {
    display: flex;
  }

  .combo {
    position: relative;
    box-sizing: border-box;
    display: flex;
    border: 1px solid #abc1de;
    background: #eaf2fb;
  }

  .combo + .combo {
    border-left: 0;
  }

  .combo.family {
    width: 124px;
  }

  .combo.size {
    width: 55px;
  }

  .combo select {
    appearance: none;
    width: 100%;
    border: 0;
    padding: 0 2px;
    background: transparent;
    font: inherit;
    color: #000;
  }

  .combo .caret {
    position: absolute;
    right: 4px;
    top: 8px;
  }

  .cluster {
    display: flex;
    box-sizing: border-box;
    border: 1px solid #9db8da;
    border-radius: 3px;
    background: linear-gradient(#dbe7f5, #c9dbf0 50%, #c0d5ee 52%, #d0e0f3);
  }

  .glyph {
    width: 22px;
    gap: 3px;
    border-right: 1px solid #bcd0e9;
    color: #111;
    font-family: 'Liberation Serif', serif;
    font-size: 16px;
  }

  .glyph:last-child {
    border-right: 0;
  }

  .glyph text {
    font-family: 'Noto Sans', sans-serif;
  }

  .font-color text {
    font-family: 'Liberation Serif', serif;
  }

  .glyph.on {
    background: linear-gradient(#fbd79b, #fcab4a 50%, #fedd86);
    outline: 1px solid #c8a564;
  }

  .glyph.wide {
    width: 36px;
    gap: 8px;
  }

  .glyph.pair {
    width: 34px;
    gap: 5px;
  }

  .glyph.multi {
    width: 29px;
    gap: 2px;
  }

  .font .glyph {
    width: 24px;
  }

  .font .row .glyph.on,
  .font .row .cluster:last-child .glyph:only-child {
    width: 22px;
  }

  .font .glyph.wide {
    width: 36px;
  }

  .font .glyph.pair {
    width: 32px;
    gap: 4px;
  }

  .font .glyph.case {
    width: 30px;
    font-size: 15px;
    font-weight: bold;
  }

  .font .serif-a {
    gap: 0;
    width: 21px;
    font-size: 18px;
    font-weight: bold;
  }

  .serif-a svg {
    align-self: flex-start;
    margin-top: 3px;
  }

  .font .less {
    font-size: 14px;
  }

  .strike {
    font-size: 13px;
    font-weight: bold;
  }

  .script {
    font-family: 'Noto Sans', sans-serif;
    font-size: 14px;
    gap: 1px;
  }

  .script sub,
  .script sup {
    font-size: 8px;
    line-height: 8px;
    color: #2f5a9c;
  }

  .script sub {
    align-self: flex-end;
    padding-bottom: 2px;
  }

  .script sup {
    align-self: flex-start;
    padding-top: 3px;
  }

  .pilcrow {
    font-size: 18px;
  }

  .sort {
    gap: 1px;
  }

  .letters {
    display: flex;
    flex-direction: column;
    font-size: 10px;
    font-weight: bold;
    line-height: 9px;
    color: #3d66a8;
  }

  .letters span:last-child {
    color: #a0463c;
  }

  /* styles gallery */
  .gallery {
    display: flex;
    height: 60px;
    margin-top: 4px;
    box-sizing: border-box;
    border: 1px solid #b3cbe8;
    background: #d4e4f7;
  }

  .style {
    flex-direction: column;
    justify-content: flex-start;
    width: 72px;
    padding: 5px 4px;
  }

  .style.selected {
    border: 2px solid #d9a04a;
    border-bottom-color: #f0c050;
    padding: 3px 2px;
    border-radius: 2px;
    background: #fbe9bd;
  }

  .sample {
    display: flex;
    align-items: center;
    width: 60px;
    height: 32px;
    padding: 0 2px;
    overflow: hidden;
    background: #fff;
    color: #000;
    font-size: 16px;
    line-height: 32px;
  }

  .label {
    width: 64px;
    height: 16px;
    background: #fff;
    color: #14145a;
    text-align: center;
  }

  .serif {
    font-family: 'Liberation Serif', serif;
  }

  .sans {
    font-family: Lato, sans-serif;
    font-size: 13px;
  }

  .cambria {
    font-family: 'DejaVu Serif', serif;
    font-size: 13px;
  }

  .little {
    font-size: 12px;
  }

  .title {
    font-size: 26px;
  }

  .bold {
    font-weight: bold;
  }

  .italic {
    font-style: italic;
  }

  .blue {
    color: #4f81a9;
  }

  .navy {
    color: #1f364c;
  }

  .grey {
    color: #808080;
  }

  .underlined {
    text-decoration: underline;
    text-underline-offset: 5px;
  }

  .gallery-scroll {
    display: flex;
    flex-direction: column;
    width: 14px;
  }

  .gallery-scroll button {
    flex: 1;
    border: 1px solid #b3cbe8;
    background: #d9e7f8;
  }

  .gallery-scroll button:disabled {
    background: #e6e9ee;
  }

  .change {
    width: 56px;
    margin-left: 4px;
    gap: 0;
  }

  .change span {
    line-height: 13px;
  }

  .change svg:first-child {
    margin-bottom: 5px;
  }

  .change span .caret {
    margin: 0;
    vertical-align: middle;
  }

  /* document area */
  main {
    display: flex;
    flex: 1;
    min-height: 0;
    background: #9ebce6;
  }

  .left-rail {
    display: flex;
    flex-direction: column;
    gap: 30px;
    width: 24px;
    padding-top: 2px;
    box-sizing: border-box;
    overflow: hidden;
  }

  .tab-stop {
    height: 23px;
    border: 1px solid #6488c0;
    background: #a9c5ec;
  }

  .tab-stop span {
    display: flex;
    align-items: center;
    justify-content: center;
    width: 13px;
    height: 13px;
    border: 1px solid #56709c;
    background: #f1f5fb;
  }

  .v-ruler {
    margin-left: 5px;
  }

  .v-ruler text,
  .ruler-row text {
    font-size: 10px;
    fill: #44536c;
    text-anchor: middle;
  }

  .work {
    display: flex;
    flex-direction: column;
    flex: 1;
    min-width: 0;
  }

  .ruler-row {
    display: flex;
    justify-content: center;
    height: 23px;
    padding-top: 3px;
  }

  .canvas {
    position: relative;
    display: flex;
    flex-direction: column;
    align-items: center;
    gap: 24px;
    flex: 1;
    overflow: hidden;
    background: linear-gradient(#a0c0ea 0, #8dacdb 12%, #7c9fcf 28%, #6c90c4 48%, #5f86bd 62%, #527aad 74%, #547eb4 80%, #6590cd 100%);
  }

  .swoosh {
    position: absolute;
    left: 0;
    top: 0;
  }

  .page {
    position: relative;
    flex: 1;
    width: 1350px;
    box-sizing: border-box;
    border: 1px solid #4b5a70;
    border-bottom: 0;
    background: #fff;
    box-shadow: 4px 3px 8px rgba(20, 35, 65, 0.7);
  }

  .page.previous {
    flex: none;
    height: 5px;
    border-top: 0;
    border-bottom: 1px solid #4b5a70;
  }

  .task {
    display: flex;
    align-items: center;
    gap: 9px;
    margin: 0;
    padding: 96px 0 0 111px;
    height: 84px;
    color: #000;
    font: 32px/36px 'Liberation Serif', serif;
  }

  .frac {
    display: flex;
    flex-direction: column;
    font: 20px/24px 'DejaVu Serif', serif;
  }

  .line {
    display: flex;
    justify-content: space-between;
    height: 42px;
  }

  .num {
    align-items: center;
    border-bottom: 2px solid #000;
  }

  .den {
    padding-top: 4px;
    height: 38px;
  }

  .line sub {
    padding-top: 11px;
    font-size: 15px;
    line-height: 16px;
  }

  .arg {
    padding-left: 5px;
  }

  .third {
    display: flex;
    flex-direction: column;
    width: 12px;
    margin-right: 2px;
    text-align: center;
    font-size: 14px;
    line-height: 20px;
  }

  .third span:first-child {
    border-bottom: 1px solid #000;
  }

  .root {
    display: flex;
    padding-left: 4px;
  }

  .root span {
    height: 22px;
    border-top: 1px solid #000;
  }

  .cursor {
    width: 2px;
    height: 36px;
    margin: 119px 0 0 111px;
    background: #000;
  }

  /* vertical scroll bar */
  .scroll {
    display: flex;
    flex-direction: column;
    align-items: center;
    width: 17px;
    padding-top: 4px;
    box-sizing: border-box;
    background: #a5c3ee;
  }

  .split {
    width: 9px;
    height: 2px;
    background: #2b4677;
  }

  .ruler-toggle {
    width: 15px;
    height: 15px;
    margin: 3px 0 2px;
    border: 1px solid #8094b5;
    background: #d7e0ee;
  }

  .track {
    display: flex;
    flex-direction: column;
    align-items: center;
    flex: 1;
    width: 15px;
    padding: 5px 0;
    background: #7a9ac8;
  }

  .thumb {
    display: flex;
    align-items: center;
    justify-content: center;
    width: 13px;
    height: 41px;
    margin: auto 0 61px;
    border: 1px solid #5671a0;
    background: linear-gradient(90deg, #f3f7fc, #dae5f3 50%, #bccfe8);
  }

  .jump {
    display: flex;
    flex-direction: column;
    align-items: center;
    gap: 9px;
    padding: 4px 0 7px;
  }

  /* status bar */
  .status {
    display: flex;
    align-items: center;
    height: 22px;
    border-top: 1px solid #5f83b8;
    box-sizing: border-box;
    background: linear-gradient(#dbe9fb, #c6dcf9 35%, #b0cff7 50%, #c8def9 80%, #dcebfd);
    color: #15356e;
  }

  .status > button {
    height: 18px;
    padding: 0 8px;
    border-right: 1px solid #9dbde8;
  }

  .status .lang {
    gap: 15px;
  }

  .right {
    display: flex;
    align-items: center;
    height: 21px;
    margin-left: auto;
    padding: 0 5px 0 5px;
    border-left: 1px solid #7fa3d6;
  }

  .views {
    display: flex;
    height: 18px;
    border: 1px solid #93b1da;
    border-radius: 2px;
  }

  .views button {
    width: 18px;
  }

  .views .on {
    background: linear-gradient(#fde3a7, #f9c55f);
  }

  .percent {
    width: 44px;
  }

  .round {
    width: 17px;
    height: 17px;
    border: 1px solid #5b7099;
    border-radius: 50%;
    background: #e6eefa;
  }

  input[type='range'] {
    appearance: none;
    width: 101px;
    height: 16px;
    margin: 0;
    background: linear-gradient(#7d9ccb, #7d9ccb) center / 100% 1px no-repeat;
  }

  input[type='range']::-webkit-slider-thumb {
    appearance: none;
    width: 9px;
    height: 13px;
    border: 1px solid #5b7099;
    border-radius: 1px 1px 5px 5px;
    background: linear-gradient(90deg, #f5f8fd, #c2d1e8);
  }

  /* taskbar */
  .taskbar {
    position: relative;
    display: flex;
    align-items: center;
    height: 30px;
    border-top: 1px solid #1c2c42;
    box-sizing: border-box;
    background:
      radial-gradient(ellipse 30px 8px at 1310px 6px, rgba(50, 65, 85, 0.6), transparent),
      radial-gradient(ellipse 60px 6px at 1400px 5px, rgba(50, 65, 85, 0.6), transparent),
      radial-gradient(ellipse 70px 6px at 1540px 6px, rgba(50, 65, 85, 0.5), transparent),
      radial-gradient(ellipse 90px 6px at 1430px 22px, rgba(50, 65, 85, 0.5), transparent),
      radial-gradient(ellipse 120px 6px at 1740px 5px, rgba(50, 65, 85, 0.5), transparent),
      linear-gradient(90deg, #0c1118 0, #10151d 16%, #8ba5c4 18%, #8ca6c5 66%, #8096ae 69%, #8ba2bc 75%, #788ea6 84%, #8299b3 92%, #66788b 100%);
    color: #fff;
    font-size: 11px;
  }

  .start {
    position: absolute;
    left: 8px;
    bottom: -1px;
    z-index: 2;
    width: 37px;
    height: 37px;
    border: 1px solid #6fa0bf;
    border-radius: 50%;
    background: radial-gradient(circle at 50% 95%, #4fd0f0, #1c5a86 45%, #42647f 75%, #8fb1c9);
  }

  .tasks {
    display: flex;
    gap: 3px;
    flex: none;
    padding-left: 59px;
  }

  .task-button {
    justify-content: flex-start;
    gap: 4px;
    width: 159px;
    height: 29px;
    padding: 0 8px;
    border: 1px solid #3e4d60;
    border-radius: 3px;
    box-shadow: inset 0 0 0 1px rgba(255, 255, 255, 0.35);
  }

  .app-icon {
    width: 16px;
    height: 16px;
  }

  .dark {
    background: linear-gradient(170deg, #7d838b 0, #2b3036 40%, #0e1217 60%, #1a2029);
  }

  .half {
    background: linear-gradient(90deg, rgba(20, 24, 30, 0.8) 0 55%, #8298b3 65%, #9db2ca);
  }

  .glass {
    background: linear-gradient(170deg, #b4c3d3, #9aafc7 45%, #8aa2bf 50%, #9cb2cb);
  }

  .current {
    background: linear-gradient(170deg, #d3dce6, #c0cfdf 45%, #b3c4d8 50%, #c9d6e4);
  }

  .bare {
    justify-content: center;
    width: 43px;
    border: 0;
    box-shadow: none;
  }

  .grouped {
    width: 160px;
    margin-right: -3px;
    border-right-color: #7f95b0;
    border-radius: 0;
  }

  .tray {
    display: flex;
    align-items: center;
    gap: 8px;
    margin-left: auto;
  }

  .locale {
    margin-right: 6px;
  }

  time {
    margin: 0 17px 0 23px;
  }

  .desktop {
    width: 14px;
    height: 29px;
    border: 1px solid #a4b4c5;
    background: linear-gradient(#95a5b6, #5a6b7e);
  }
</style>
